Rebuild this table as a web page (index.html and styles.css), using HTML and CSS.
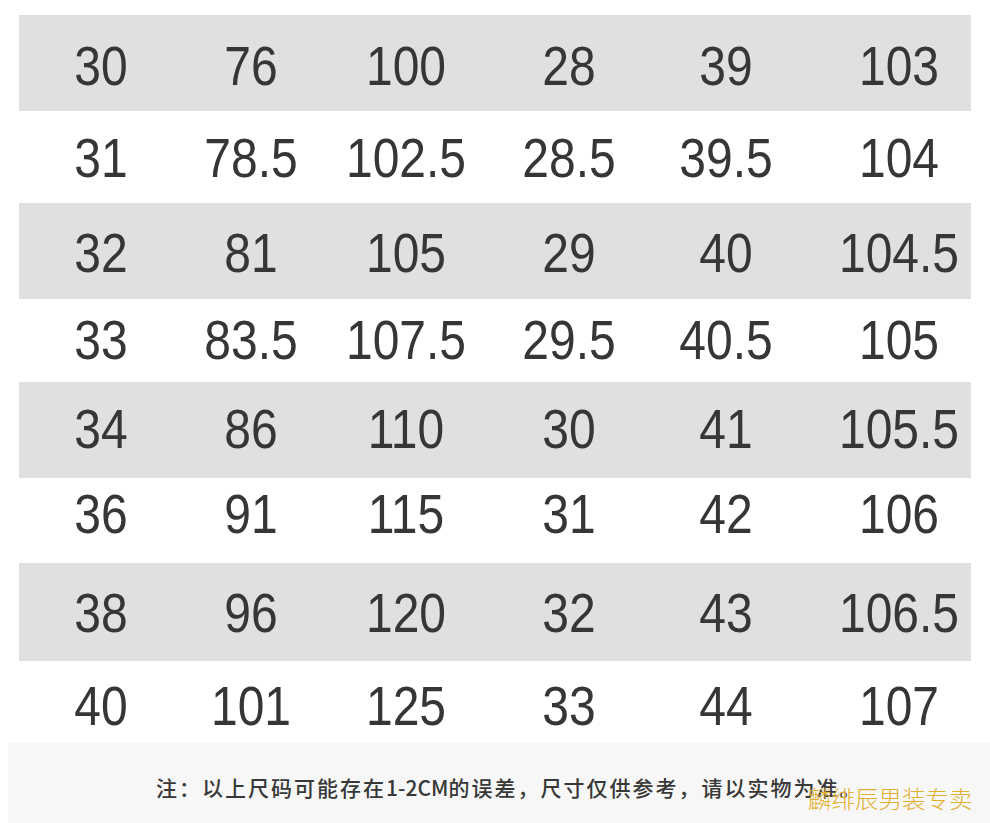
FILE: index.html
```html
<!DOCTYPE html>
<html lang="zh-CN">
<head>
<meta charset="utf-8">
<title>尺码表</title>
<link rel="stylesheet" href="styles.css">
</head>
<body>
<div class="page">
  <div class="chart">
    <div class="row gray r30"><span class="c">30</span><span class="c">76</span><span class="c">100</span><span class="c">28</span><span class="c">39</span><span class="c last">103</span></div>
    <div class="row r31"><span class="c">31</span><span class="c">78.5</span><span class="c">102.5</span><span class="c">28.5</span><span class="c">39.5</span><span class="c last">104</span></div>
    <div class="row gray r32"><span class="c">32</span><span class="c">81</span><span class="c">105</span><span class="c">29</span><span class="c">40</span><span class="c last">104.5</span></div>
    <div class="row r33"><span class="c">33</span><span class="c">83.5</span><span class="c">107.5</span><span class="c">29.5</span><span class="c">40.5</span><span class="c last">105</span></div>
    <div class="row gray r34"><span class="c">34</span><span class="c">86</span><span class="c">110</span><span class="c">30</span><span class="c">41</span><span class="c last">105.5</span></div>
    <div class="row r36"><span class="c">36</span><span class="c">91</span><span class="c">115</span><span class="c">31</span><span class="c">42</span><span class="c last">106</span></div>
    <div class="row gray r38"><span class="c">38</span><span class="c">96</span><span class="c">120</span><span class="c">32</span><span class="c">43</span><span class="c last">106.5</span></div>
    <div class="row r40"><span class="c">40</span><span class="c">101</span><span class="c">125</span><span class="c">33</span><span class="c">44</span><span class="c last">107</span></div>
  </div>
  <div class="note">
    <p class="note-text">注：以上尺码可能存在<span class="cm">1-2CM</span>的误差，尺寸仅供参考，请以实物为准。</p>
    <span class="watermark">麟绯辰男装专卖</span>
  </div>
</div>
</body>
</html>
```
FILE: styles.css
```css
html, body {
  margin: 0;
  padding: 0;
  background: #ffffff;
}

.page {
  width: 990px;
  height: 823px;
  overflow: hidden;
}

.chart {
  padding: 15px 19px 0 19px;
}

.row {
  display: grid;
  grid-template-columns: 164px 136px 174px 152px 162px 164px;
  align-items: center;
  box-sizing: border-box;
  font-family: "Liberation Sans", Arial, sans-serif;
  font-weight: 400;
  font-size: 48px;
  line-height: 48px;
  color: #363636;
}

.row.gray {
  background: #dfe0e0;
}

.c {
  display: block;
  text-align: center;
  transform: scaleY(1.15);
}

.c.last {
  padding-left: 20px;
}

.r30 { height: 96px; padding-top: 7px; }
.r31 { height: 92px; padding-top: 3px; }
.r32 { height: 96px; padding-top: 5px; }
.r33 { height: 83px; padding-top: 0; }
.r34 { height: 96px; padding-top: 0; }
.r36 { height: 85px; padding-bottom: 11px; }
.r38 { height: 98px; padding-top: 3px; }
.r40 { height: 82px; padding-top: 10px; }

.note {
  position: relative;
  margin-left: 8px;
  height: 80px;
  box-sizing: border-box;
  background: #f7f7f7;
  display: flex;
  align-items: center;
  padding: 7px 0 0 148px;
}

.note-text {
  margin: 0;
  font-family: "Noto Sans CJK SC", "Noto Sans", sans-serif;
  font-size: 21px;
  line-height: 24px;
  letter-spacing: 2px;
  color: #383838;
  font-weight: 500;
  white-space: nowrap;
}

.cm {
  letter-spacing: 0;
}

.watermark {
  position: absolute;
  left: 800px;
  top: 43px;
  font-family: "Noto Sans CJK SC", sans-serif;
  font-weight: 300;
  font-size: 23.5px;
  line-height: 24px;
  color: #e2b030;
  white-space: nowrap;
}
```
